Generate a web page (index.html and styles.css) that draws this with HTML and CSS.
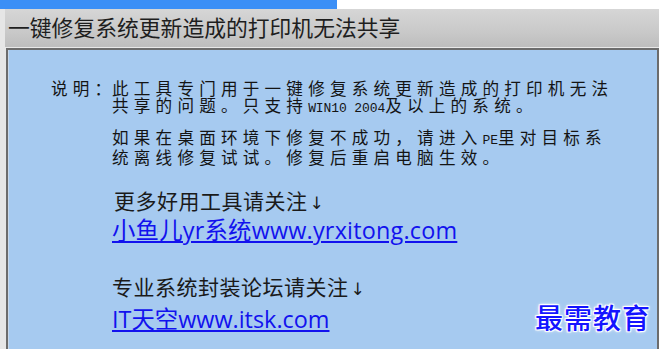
FILE: index.html
```html
<!DOCTYPE html>
<html lang="zh-CN">
<head>
    <meta charset="UTF-8">
    <meta name="viewport" content="width=device-width, initial-scale=1.0">
    <title>一键修复系统更新造成的打印机无法共享</title>
    <link rel="stylesheet" href="styles.css">
</head>
<body>
    <div class="top-strip">
        <div class="top-tab"></div>
    </div>

    <div class="window">
        <div class="title-bar">一键修复系统更新造成的打印机无法共享</div>

        <div class="content">
            <div class="notice">
                <span class="notice-label">说明：</span>
                <div class="notice-text">
                    <div class="line tight">此工具专门用于一键修复系统更新造成的打印机无法</div>
                    <div class="line tight">共享的问题。只支持<span class="latin">WIN10 2004</span>及以上的系统。</div>
                    <div class="line loose first-loose">如果在桌面环境下修复不成功，请进入<span class="latin">PE</span>里对目标系</div>
                    <div class="line loose">统离线修复试试。修复后重启电脑生效。</div>
                </div>
            </div>

            <div class="links">
                <p class="follow follow-first">更多好用工具请关注<span class="arrow">↓</span></p>
                <a class="site-link link-first" href="#">小鱼儿yr系统www.yrxitong.com</a>

                <p class="follow follow-second">专业系统封装论坛请关注<span class="arrow">↓</span></p>
                <a class="site-link link-second" href="#">IT天空www.itsk.com</a>
            </div>
        </div>
    </div>

    <div class="watermark">最需教育</div>
</body>
</html>
```

FILE: styles.css
```css
html, body {
    margin: 0;
    padding: 0;
}

body {
    width: 659px;
    height: 349px;
    overflow: hidden;
    position: relative;
    background-color: #dcdcdc;
    font-family: "Noto Sans CJK SC", sans-serif;
}

.top-strip {
    height: 9px;
    background-color: #fff;
    display: flex;
}

.top-tab {
    width: 337px;
    background-color: #3b8ff6;
}

.window {
    height: 340px;
    padding-left: 5px;
    background-color: #e6e6e6;
    display: flex;
    flex-direction: column;
}

.title-bar {
    height: 38px;
    padding-left: 3px;
    line-height: 36px;
    font-size: 21.8px;
    color: #1e1e1e;
    background: linear-gradient(to bottom, #d6d6d6 0%, #c9c9c9 60%, #bdbdbd 100%);
    border-bottom: 1px solid #e8e8e8;
    margin-right: -5px;
    padding-right: 5px;
}

.content {
    flex: 1;
    background-color: #a6caf0;
    border-top: 2px solid #6c6c6c;
    border-left: 2px solid #6c6c6c;
    border-right: 2px solid #6c6c6c;
    margin-left: 1px;
    padding-top: 30px;
    padding-left: 43px;
    color: #141414;
    box-shadow: inset 1px 0 0 #c8d8ea;
}

.notice {
    display: flex;
    font-size: 16.6px;
    letter-spacing: 5.2px;
}

.notice-label {
    height: 17px;
    line-height: 17px;
    width: 61px;
    white-space: nowrap;
}

.line {
    white-space: nowrap;
}

.tight {
    height: 17px;
    line-height: 17px;
}

.loose {
    height: 20px;
    line-height: 20px;
}

.first-loose {
    margin-top: 13px;
}

.latin {
    font-family: "Liberation Mono", monospace;
    font-size: 13px;
    line-height: 1;
    letter-spacing: -0.1px;
}

.links {
    padding-left: 61px;
}

.follow {
    margin: 0;
    height: 24px;
    font-size: 21px;
    line-height: 24px;
    letter-spacing: 0.5px;
    color: #1a1a1a;
    white-space: nowrap;
}

.follow-first {
    margin-top: 21px;
    padding-left: 2px;
}

.follow-second {
    margin-top: 31px;
}

.arrow {
    font-family: "DejaVu Sans", sans-serif;
    font-size: 17px;
    line-height: 1;
    margin-left: 2px;
}

.site-link {
    display: block;
    width: max-content;
    height: 26px;
    font-family: "Open Sans", "Noto Sans CJK SC", sans-serif;
    font-size: 23.4px;
    line-height: 26px;
    color: #1212ee;
    text-decoration: underline;
    text-underline-offset: 2px;
}

.link-first {
    margin-top: 5px;
    letter-spacing: 0.2px;
}

.link-second {
    margin-top: 8px;
}

.watermark {
    position: absolute;
    left: 535px;
    top: 297px;
    font-size: 28px;
    letter-spacing: 1px;
    color: #1414ff;
    font-weight: 500;
    text-shadow: 0 0 2px #fff, 1px 1px 1px #fff, -1px -1px 1px #fff, 1px -1px 1px #fff, -1px 1px 1px #fff, 0 0 4px #fff;
}
```
